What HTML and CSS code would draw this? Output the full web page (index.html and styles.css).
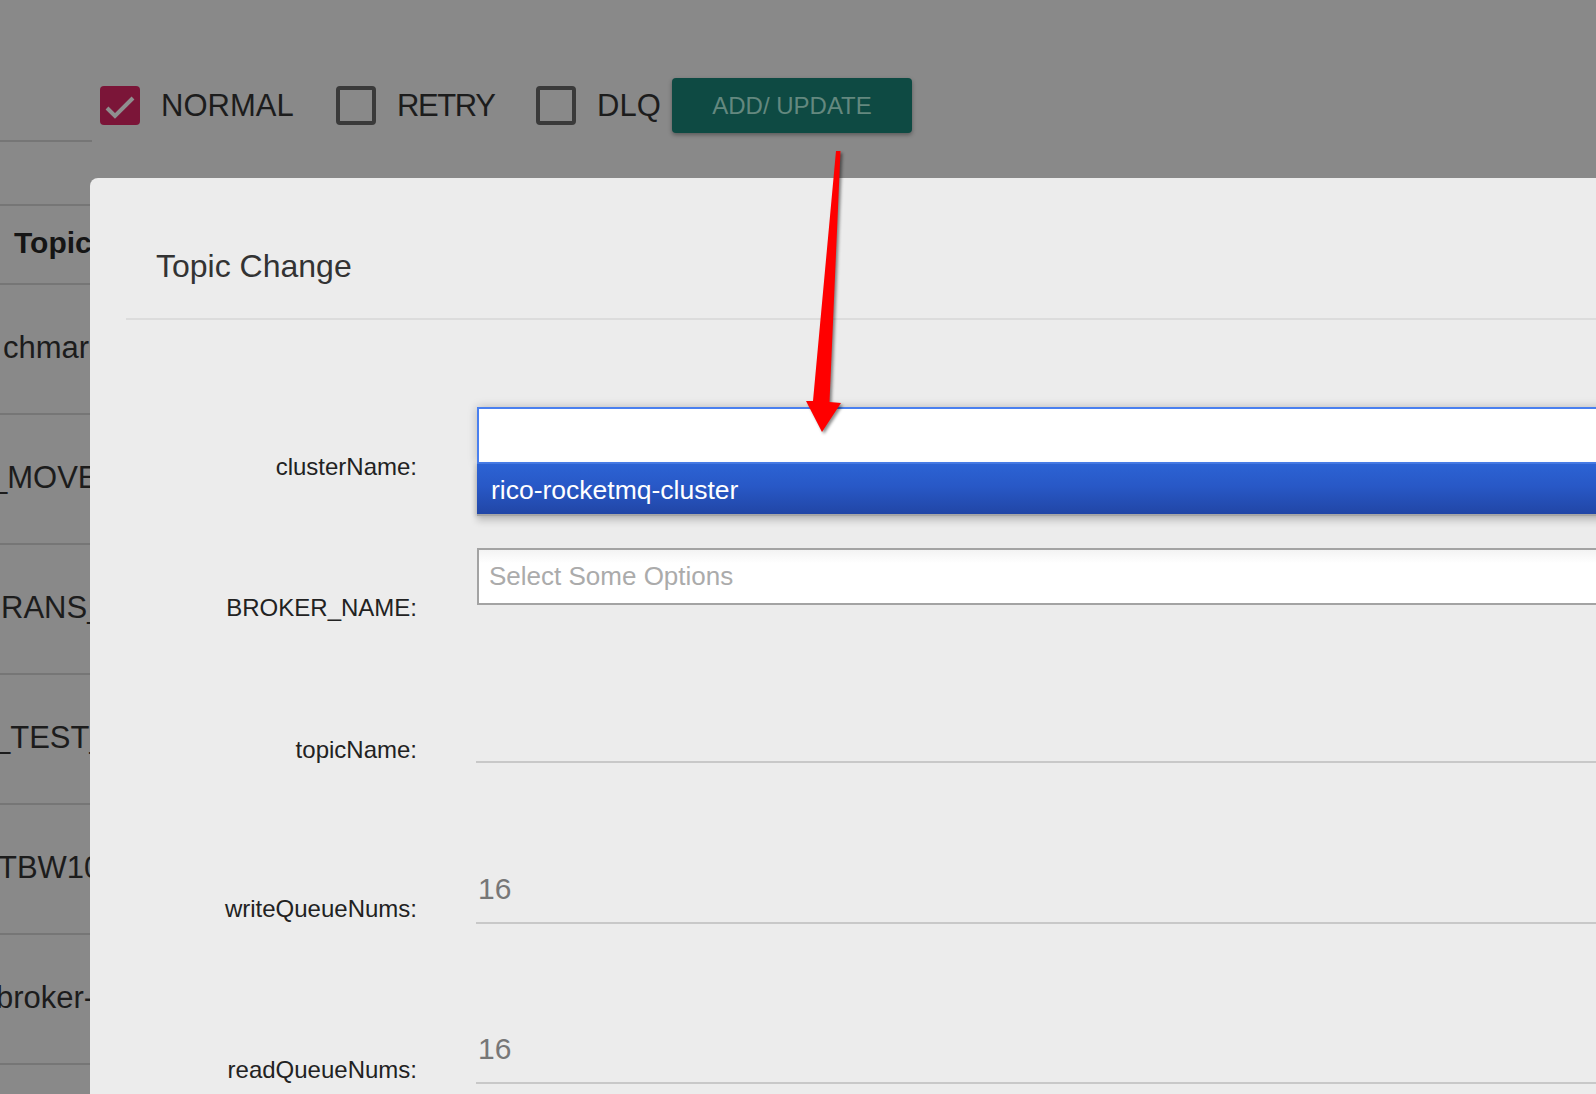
FILE: index.html
```html
<!DOCTYPE html>
<html lang="en">
<head>
<meta charset="utf-8">
<title>Topic Change</title>
<link rel="stylesheet" href="styles.css">
</head>
<body>
<div class="page">
  <div class="toolbar">
    <div class="search"></div>
    <div class="filters">
      <label class="check">
        <span class="box checked"><svg viewBox="0 0 40 39" class="tick"><path d="M7 22 L15 30 L33 12"/></svg></span>
        <span class="check-text w-normal">NORMAL</span>
      </label>
      <label class="check">
        <span class="box"></span>
        <span class="check-text w-retry">RETRY</span>
      </label>
      <label class="check">
        <span class="box"></span>
        <span class="check-text w-dlq">DLQ</span>
      </label>
    </div>
    <button class="btn-add">ADD/ UPDATE</button>
  </div>

  <div class="table">
    <div class="tr th"><span class="cell bold">Topic</span></div>
    <div class="tr"><span class="cell c1">chmark</span></div>
    <div class="tr"><span class="cell c2">_MOVED</span></div>
    <div class="tr"><span class="cell c3">RANS_H</span></div>
    <div class="tr"><span class="cell c4">_TEST_T</span></div>
    <div class="tr"><span class="cell c5">TBW102</span></div>
    <div class="tr"><span class="cell c6">broker-a</span></div>
    <div class="tr"><span class="cell"></span></div>
  </div>
</div>

<div class="modal">
  <div class="modal-header">
    <h2 class="modal-title">Topic Change</h2>
  </div>
  <div class="modal-divider"></div>
  <form class="form">
    <div class="form-row row-cluster">
      <label class="form-label lbl-chosen">clusterName:</label>
      <div class="chosen">
        <div class="chosen-drop">
          <div class="chosen-option">rico-rocketmq-cluster</div>
        </div>
      </div>
    </div>
    <div class="form-row row-broker">
      <label class="form-label lbl-chosen">BROKER_NAME:</label>
      <div class="select-box"><span class="placeholder">Select Some Options</span></div>
    </div>
    <div class="form-row row-topic">
      <label class="form-label lbl-topic">topicName:</label>
      <div class="text-input"></div>
    </div>
    <div class="form-row row-write">
      <label class="form-label lbl-write">writeQueueNums:</label>
      <div class="text-input">16</div>
    </div>
    <div class="form-row row-read">
      <label class="form-label lbl-read">readQueueNums:</label>
      <div class="text-input">16</div>
    </div>
  </form>
</div>

<svg class="annotation" viewBox="0 0 1596 1094" width="1596" height="1094">
  <polygon class="arrow" points="836,151 840.5,151 829.5,402 841,403 822,432 806,401 813,401"/>
</svg>
</body>
</html>
```

FILE: styles.css
```css
html, body {
  margin: 0;
  padding: 0;
}

body {
  width: 1596px;
  height: 1094px;
  overflow: hidden;
  position: relative;
  background: #898989;
  font-family: "Liberation Sans", Arial, Helvetica, sans-serif;
  color: #1c1c1c;
}

.page {
  padding-top: 78px;
}

/* toolbar */
.toolbar {
  display: flex;
  align-items: center;
  height: 55px;
}

.search {
  align-self: flex-start;
  width: 92px;
  height: 62px;
  border-bottom: 2px solid #767676;
  margin-right: 8px;
  flex: none;
}

.filters {
  display: flex;
  align-items: center;
  gap: 42px;
}

.check {
  display: flex;
  align-items: center;
  gap: 21px;
}

.box {
  width: 40px;
  height: 39px;
  box-sizing: border-box;
  border: 4px solid #3a3a3a;
  border-radius: 4px;
  flex: none;
  display: block;
}

.box.checked {
  border: none;
  background: #7b1538;
}

.tick {
  display: block;
  width: 40px;
  height: 39px;
}

.tick path {
  fill: none;
  stroke: #8f8f8f;
  stroke-width: 4;
  stroke-linecap: butt;
  stroke-linejoin: miter;
}

.check-text {
  font-size: 31px;
  line-height: 40px;
  color: #1c1c1c;
  white-space: nowrap;
  display: block;
}

.w-normal { width: 133px; }
.w-retry { width: 97px; letter-spacing: -1.4px; }
.w-dlq { width: 65px; }

.btn-add {
  margin-left: 10px;
  width: 240px;
  height: 55px;
  border: none;
  border-radius: 4px;
  background: #0e4a43;
  color: #64887f;
  font-family: "Liberation Sans", Arial, sans-serif;
  font-size: 24px;
  padding: 0;
  box-shadow: 0 2px 4px rgba(0, 0, 0, 0.35);
}

/* table behind modal */
.table {
  margin-top: 71px;
  width: 90px;
  overflow: hidden;
}

.tr {
  border-top: 2px solid #767676;
  height: 124px;
  display: flex;
  align-items: center;
  padding-bottom: 4px;
  box-sizing: content-box;
  font-size: 31px;
  line-height: 1;
  white-space: nowrap;
}

.tr.th {
  height: 73px;
}

.cell {
  display: block;
}

.bold {
  font-weight: bold;
  font-size: 30px;
  margin-left: 14px;
  color: #151515;
}

.c1 { margin-left: 3px; }
.c2 { margin-left: -10px; }
.c3 { margin-left: 1px; }
.c4 { margin-left: -7px; }
.c5 { margin-left: -2px; }
.c6 { margin-left: -4px; }

/* modal */
.modal {
  position: absolute;
  left: 90px;
  top: 178px;
  width: 1560px;
  height: 960px;
  background: #ececec;
  border-radius: 8px;
  overflow: hidden;
}

.modal-header {
  padding: 72px 0 0 66px;
}

.modal-title {
  margin: 0;
  font-size: 32px;
  line-height: 32px;
  font-weight: normal;
  color: #333;
}

.modal-divider {
  margin: 36px 0 0 36px;
  border-top: 2px solid #dcdcdc;
}

.form {
  display: flex;
  flex-direction: column;
  padding-top: 87px;
  margin: 0;
}

.form-row {
  display: grid;
  grid-template-columns: 327px 1fr;
  column-gap: 60px;
  align-items: start;
  margin-right: 30px;
}

.row-cluster { margin-top: 0; height: 57px; }
.row-broker { margin-top: 84px; height: 57px; }
.row-topic { margin-top: 100px; height: 58px; }
.row-write { margin-top: 103px; height: 58px; }
.row-read { margin-top: 102px; height: 58px; }

.form-label {
  text-align: right;
  font-size: 24px;
  line-height: 30px;
  color: #222;
  white-space: nowrap;
}

.lbl-chosen { padding-top: 45px; }
.lbl-topic { padding-top: 30px; }
.lbl-write { padding-top: 28px; }
.lbl-read { padding-top: 29px; }

.chosen {
  position: relative;
  height: 57px;
  box-sizing: border-box;
  border: 2px solid #4a80ef;
  background: #fff;
  box-shadow: 0 0 9px rgba(0, 0, 0, 0.22);
}

.chosen-drop {
  position: absolute;
  left: -2px;
  right: -2px;
  top: calc(100% + 2px);
  border-bottom: 2px solid #a6a6a6;
  box-shadow: 0 5px 7px rgba(0, 0, 0, 0.18), -2px 0 4px rgba(0, 0, 0, 0.12);
  background: #fff;
}

.chosen-option {
  height: 50px;
  line-height: 52px;
  padding-left: 14px;
  font-size: 26.5px;
  color: #fff;
  background: linear-gradient(to bottom, #2c63d4 0%, #2858c6 45%, #2146a6 100%);
  white-space: nowrap;
}

.select-box {
  height: 57px;
  box-sizing: border-box;
  border: 2px solid #a3a3a3;
  background: linear-gradient(to bottom, #f3f3f3 0%, #ffffff 25%);
  padding-left: 10px;
  line-height: 53px;
}

.placeholder {
  font-size: 26px;
  color: #ababab;
  white-space: nowrap;
}

.text-input {
  height: 58px;
  box-sizing: border-box;
  margin-left: -1px;
  padding: 8px 0 0 2px;
  border-bottom: 2px solid #c8c8c8;
  font-size: 30px;
  line-height: 30px;
  color: #777;
}

/* annotation arrow */
.annotation {
  position: absolute;
  left: 0;
  top: 0;
  pointer-events: none;
}

.arrow {
  fill: #ff0000;
  filter: drop-shadow(2px 2px 1.5px rgba(0, 0, 0, 0.45));
}
```
